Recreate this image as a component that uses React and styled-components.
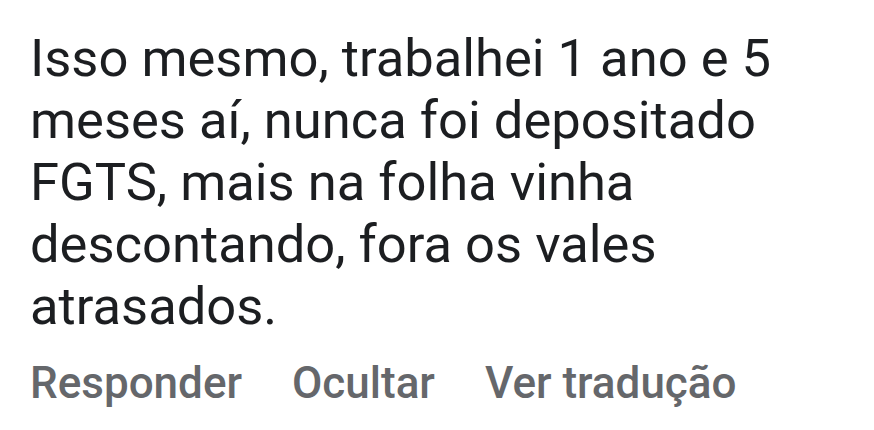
import styled, { createGlobalStyle } from "styled-components";

const GlobalStyle = createGlobalStyle`
  html, body {
    margin: 0;
    padding: 0;
    background: #ffffff;
  }
`;

const Comment = styled.article`
  width: 874px;
  height: 430px;
  box-sizing: border-box;
  padding: 27px 30px 0 30px;
  font-family: Roboto, "Liberation Sans", sans-serif;
  background: #ffffff;
`;

const Body = styled.p`
  margin: 0;
  width: 800px;
  font-size: 52.5px;
  line-height: 62px;
  color: #1c1e21;
`;

const Actions = styled.div`
  display: flex;
  gap: 50px;
  margin-top: 20px;
`;

const Action = styled.span`
  font-size: 44px;
  font-weight: 500;
  color: #65676b;
`;

export default function App() {
  return (
    <>
      <GlobalStyle />
      <Comment>
        <Body>
          Isso mesmo, trabalhei 1 ano e 5
          <br />
          meses aí, nunca foi depositado
          <br />
          FGTS, mais na folha vinha
          <br />
          descontando, fora os vales
          <br />
          atrasados.
        </Body>
        <Actions>
          <Action>Responder</Action>
          <Action>Ocultar</Action>
          <Action>Ver tradução</Action>
        </Actions>
      </Comment>
    </>
  );
}
